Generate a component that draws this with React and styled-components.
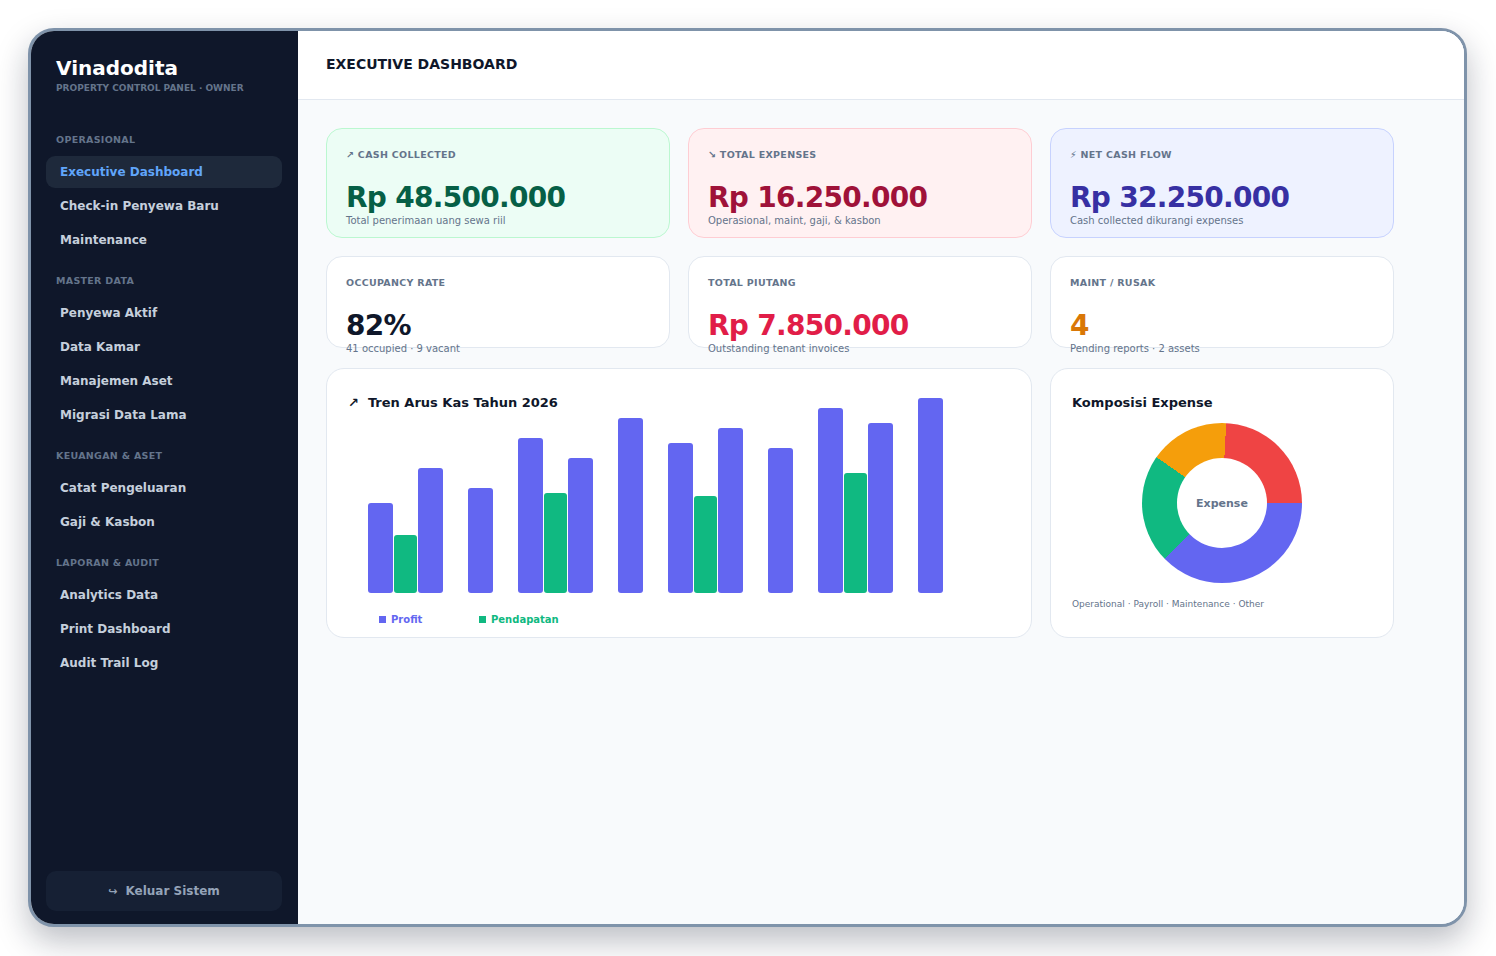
import React from "react";
import styled, { createGlobalStyle } from "styled-components";

const GlobalStyle = createGlobalStyle`
  html, body {
    margin: 0;
    padding: 0;
    background: #ffffff;
  }
  body {
    font-family: "DejaVu Sans", Verdana, sans-serif;
  }
  *, *::before, *::after {
    box-sizing: border-box;
  }
`;

/* ---------- window shell ---------- */

const Stage = styled.div`
  width: 1496px;
  height: 956px;
  padding: 28px 29px 29px 28px;
`;

const Frame = styled.div`
  width: 1439px;
  height: 899px;
  display: flex;
  overflow: hidden;
  border: 3px solid #7f93aa;
  border-radius: 26px;
  box-shadow: 0 14px 32px rgba(15, 23, 42, 0.28);
  background: #f8fafc;
`;

/* ---------- sidebar ---------- */

const Sidebar = styled.aside`
  width: 267px;
  flex-shrink: 0;
  display: flex;
  flex-direction: column;
  background: #0f172a;
  padding: 25px 16px 13px 15px;
`;

const Brand = styled.div`
  padding-left: 10px;
  margin-bottom: 21px;
`;

const BrandName = styled.div`
  font-size: 20px;
  line-height: 24px;
  font-weight: 700;
  color: #ffffff;
`;

const BrandSub = styled.div`
  margin-top: 2px;
  font-size: 9px;
  line-height: 12px;
  font-weight: 700;
  color: #64748b;
`;

const Nav = styled.nav`
  flex: 1;
  display: flex;
  flex-direction: column;
`;

const NavGroup = styled.div`
  margin-top: 19px;
  display: flex;
  flex-direction: column;
  gap: 2px;
`;

const GroupLabel = styled.div`
  padding-left: 10px;
  margin-bottom: 8px;
  font-size: 9.5px;
  line-height: 12px;
  font-weight: 700;
  letter-spacing: 0.3px;
  text-transform: uppercase;
  color: #64748b;
`;

const NavItem = styled.a`
  height: 32px;
  display: flex;
  align-items: center;
  padding: 0 14px;
  border-radius: 9px;
  font-size: 12px;
  font-weight: 700;
  text-decoration: none;
  cursor: pointer;
  color: ${(p) => (p.$active ? "#60a5fa" : "#c5cfdc")};
  background: ${(p) => (p.$active ? "#1e293b" : "transparent")};
`;

const LogoutButton = styled.button`
  height: 40px;
  width: 100%;
  display: flex;
  align-items: center;
  justify-content: center;
  border: none;
  border-radius: 10px;
  background: #162034;
  color: #94a3b8;
  font-family: inherit;
  font-size: 12px;
  font-weight: 700;
  cursor: pointer;
`;

const LogoutIcon = styled.span`
  margin-right: 8px;
  font-size: 11px;
`;

/* ---------- main column ---------- */

const Main = styled.main`
  flex: 1;
  min-width: 0;
  display: flex;
  flex-direction: column;
  background: #f8fafc;
`;

const Header = styled.header`
  height: 69px;
  flex-shrink: 0;
  display: flex;
  align-items: center;
  padding: 0 28px 2px;
  background: #ffffff;
  border-bottom: 1px solid #e2e8f0;
`;

const PageTitle = styled.h1`
  margin: 0;
  font-size: 14px;
  line-height: 18px;
  font-weight: 700;
  color: #0f172a;
`;

const Content = styled.div`
  padding: 28px;
`;

const Board = styled.div`
  width: 1068px;
`;

const KpiGrid = styled.div`
  display: grid;
  grid-template-columns: repeat(3, 1fr);
  gap: 18px;
`;

const tones = {
  green: { bg: "#ecfdf5", border: "#bbf7d0" },
  rose: { bg: "#fff1f2", border: "#fecdd3" },
  indigo: { bg: "#eef2ff", border: "#c7d2fe" },
  plain: { bg: "#ffffff", border: "#e2e8f0" },
};

const KpiCard = styled.div`
  height: ${(p) => p.$height}px;
  padding: 20px 19px;
  border-radius: 16px;
  border: 1px solid ${(p) => tones[p.$tone].border};
  background: ${(p) => tones[p.$tone].bg};
`;

const KpiLabel = styled.div`
  font-size: 9.5px;
  line-height: 12px;
  font-weight: 700;
  letter-spacing: 0.3px;
  text-transform: uppercase;
  color: #64748b;
`;

const KpiValue = styled.div`
  margin-top: 20px;
  font-size: 28px;
  line-height: 34px;
  font-weight: 700;
  letter-spacing: -0.7px;
  color: ${(p) => p.$color};
  white-space: nowrap;
`;

const KpiSub = styled.div`
  margin-top: -1px;
  font-size: 10px;
  line-height: 13px;
  color: #64748b;
  white-space: nowrap;
`;

const ChartGrid = styled.div`
  margin-top: 20px;
  display: grid;
  grid-template-columns: repeat(3, 1fr);
  gap: 18px;
`;

const Panel = styled.section`
  grid-column: span ${(p) => p.$span || 1};
  height: 270px;
  display: flex;
  flex-direction: column;
  padding: 25px 21px 0;
  border-radius: 18px;
  border: 1px solid #e2e8f0;
  background: #ffffff;
`;

const PanelTitle = styled.h2`
  margin: 0;
  font-size: 13px;
  line-height: 18px;
  font-weight: 700;
  color: #0f172a;
`;

const TitleIcon = styled.span`
  margin-right: 9px;
`;

/* bar chart */

const BarArea = styled.div`
  margin-top: 11px;
  height: 170px;
  display: flex;
  align-items: flex-end;
  padding-left: 20px;
`;

const MonthCell = styled.div`
  width: 50px;
  height: 100%;
  flex-shrink: 0;
  display: flex;
  align-items: flex-end;
  gap: 1px;
`;

const Bar = styled.div`
  flex-shrink: 0;
  width: ${(p) => p.$width}px;
  border-radius: 3px;
  background: ${(p) => p.$color};
`;

const Legend = styled.div`
  margin-top: 20px;
  display: flex;
  padding-left: 31px;
`;

const LegendItem = styled.div`
  width: 100px;
  display: flex;
  align-items: center;
  gap: 5px;
  font-size: 10px;
  line-height: 13px;
  font-weight: 700;
  color: ${(p) => p.$color};
`;

const Swatch = styled.span`
  width: 7px;
  height: 7px;
  background: currentColor;
`;

/* donut */

const DonutWrap = styled.div`
  margin-top: 11px;
  display: flex;
  justify-content: center;
`;

const Donut = styled.div`
  width: 160px;
  height: 160px;
  border-radius: 50%;
  display: flex;
  align-items: center;
  justify-content: center;
  background: conic-gradient(
    #f59e0b 0deg 3deg,
    #ef4444 3deg 90deg,
    #6366f1 90deg 226deg,
    #10b981 226deg 305deg,
    #f59e0b 305deg 360deg
  );
`;

const DonutHole = styled.div`
  width: 90px;
  height: 90px;
  border-radius: 50%;
  background: #ffffff;
  display: flex;
  align-items: center;
  justify-content: center;
  font-size: 11px;
  font-weight: 700;
  color: #64748b;
`;

const Caption = styled.div`
  margin-top: 15px;
  font-size: 9px;
  line-height: 12px;
  color: #64748b;
`;

/* ---------- data ---------- */

const navGroups = [
  {
    label: "Operasional",
    items: ["Executive Dashboard", "Check-in Penyewa Baru", "Maintenance"],
  },
  {
    label: "Master Data",
    items: ["Penyewa Aktif", "Data Kamar", "Manajemen Aset", "Migrasi Data Lama"],
  },
  { label: "Keuangan & Aset", items: ["Catat Pengeluaran", "Gaji & Kasbon"] },
  {
    label: "Laporan & Audit",
    items: ["Analytics Data", "Print Dashboard", "Audit Trail Log"],
  },
];

const kpiTop = [
  {
    tone: "green",
    label: "↗ Cash Collected",
    value: "Rp 48.500.000",
    color: "#065f46",
    sub: "Total penerimaan uang sewa riil",
  },
  {
    tone: "rose",
    label: "↘ Total Expenses",
    value: "Rp 16.250.000",
    color: "#9f1239",
    sub: "Operasional, maint, gaji, & kasbon",
  },
  {
    tone: "indigo",
    label: "⚡ Net Cash Flow",
    value: "Rp 32.250.000",
    color: "#3730a3",
    sub: "Cash collected dikurangi expenses",
  },
];

const kpiBottom = [
  {
    tone: "plain",
    label: "Occupancy Rate",
    value: "82%",
    color: "#0f172a",
    sub: "41 occupied · 9 vacant",
  },
  {
    tone: "plain",
    label: "Total Piutang",
    value: "Rp 7.850.000",
    color: "#e11d48",
    sub: "Outstanding tenant invoices",
  },
  {
    tone: "plain",
    label: "Maint / Rusak",
    value: "4",
    color: "#d97706",
    sub: "Pending reports · 2 assets",
  },
];

// monthly cash flow, in px of bar height
const months = [
  { profit: 90, income: 58 },
  { profit: 125 },
  { profit: 105 },
  { profit: 155, income: 100 },
  { profit: 135 },
  { profit: 175 },
  { profit: 150, income: 97 },
  { profit: 165 },
  { profit: 145 },
  { profit: 185, income: 120 },
  { profit: 170 },
  { profit: 195 },
];

const PROFIT = "#6366f1";
const INCOME = "#10b981";

function Kpi({ tone, label, value, color, sub, height }) {
  return (
    <KpiCard $tone={tone} $height={height}>
      <KpiLabel>{label}</KpiLabel>
      <KpiValue $color={color}>{value}</KpiValue>
      <KpiSub>{sub}</KpiSub>
    </KpiCard>
  );
}

export default function App() {
  return (
    <>
      <GlobalStyle />
      <Stage>
        <Frame>
          <Sidebar>
            <Brand>
              <BrandName>Vinadodita</BrandName>
              <BrandSub>PROPERTY CONTROL PANEL · OWNER</BrandSub>
            </Brand>
            <Nav>
              {navGroups.map((g) => (
                <NavGroup key={g.label}>
                  <GroupLabel>{g.label}</GroupLabel>
                  {g.items.map((item) => (
                    <NavItem key={item} $active={item === "Executive Dashboard"}>
                      {item}
                    </NavItem>
                  ))}
                </NavGroup>
              ))}
            </Nav>
            <LogoutButton>
              <LogoutIcon>↪</LogoutIcon>
              Keluar Sistem
            </LogoutButton>
          </Sidebar>

          <Main>
            <Header>
              <PageTitle>EXECUTIVE DASHBOARD</PageTitle>
            </Header>
            <Content>
              <Board>
                <KpiGrid>
                  {kpiTop.map((k) => (
                    <Kpi key={k.label} {...k} height={110} />
                  ))}
                  {kpiBottom.map((k) => (
                    <Kpi key={k.label} {...k} height={92} />
                  ))}
                </KpiGrid>

                <ChartGrid>
                  <Panel $span={2}>
                    <PanelTitle>
                      <TitleIcon>↗</TitleIcon>Tren Arus Kas Tahun 2026
                    </PanelTitle>
                    <BarArea>
                      {months.map((m, i) => (
                        <MonthCell key={i}>
                          <Bar $width={25} $color={PROFIT} style={{ height: m.profit }} />
                          {m.income ? (
                            <Bar $width={23} $color={INCOME} style={{ height: m.income }} />
                          ) : null}
                        </MonthCell>
                      ))}
                    </BarArea>
                    <Legend>
                      <LegendItem $color={PROFIT}>
                        <Swatch />
                        Profit
                      </LegendItem>
                      <LegendItem $color={INCOME}>
                        <Swatch />
                        Pendapatan
                      </LegendItem>
                    </Legend>
                  </Panel>

                  <Panel>
                    <PanelTitle>Komposisi Expense</PanelTitle>
                    <DonutWrap>
                      <Donut>
                        <DonutHole>Expense</DonutHole>
                      </Donut>
                    </DonutWrap>
                    <Caption>Operational · Payroll · Maintenance · Other</Caption>
                  </Panel>
                </ChartGrid>
              </Board>
            </Content>
          </Main>
        </Frame>
      </Stage>
    </>
  );
}
